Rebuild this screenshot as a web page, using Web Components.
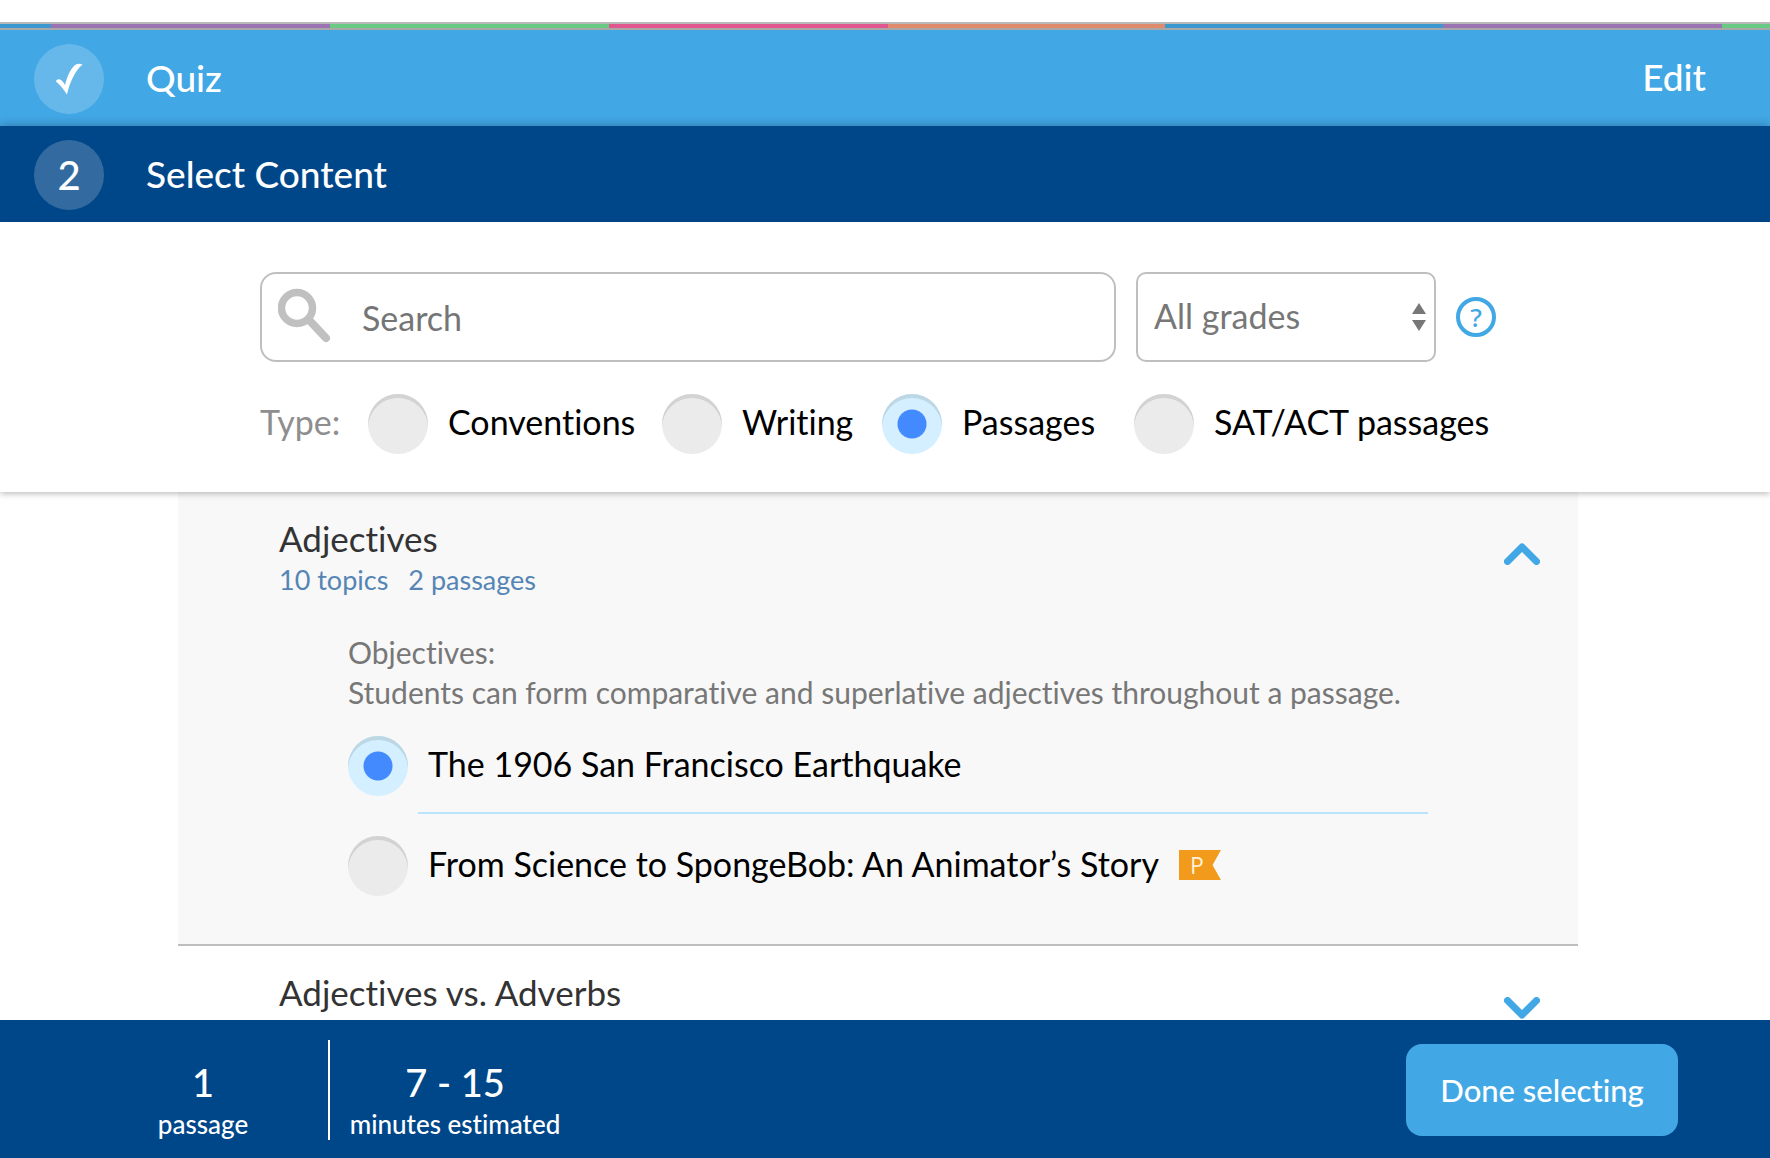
<!DOCTYPE html>
<html lang="en">
<head>
<meta charset="utf-8">
<title>Assign a quiz: select content</title>
<style>
  html, body { height: 100%; margin: 0; }
  body {
    font-family: Lato, "Open Sans", sans-serif;
    font-size: 34px;
    font-variant-ligatures: none;
    color: #000;
    background: #fff;
    --sky: #41a7e5;
    --navy: #00478a;
    --line: #bfbfbf;
  }
</style>
</head>
<body>
<quiz-app></quiz-app>

<script>
const radioStyles = `
  input[type=radio] {
    appearance: none; flex: none; margin: 0;
    width: 60px; height: 60px; border-radius: 50%;
    background: #ebebeb;
    box-shadow: inset 0 4px 0 #d3d3d3;
    cursor: pointer;
  }
  input[type=radio]:checked {
    background: radial-gradient(circle, #448aff 0 14px, #d4efff 15px);
    box-shadow: inset 0 4px 0 #bdd7e5;
  }
  label { padding-bottom: 4px; line-height: 40px; white-space: nowrap; cursor: pointer; }
`;

function define(name, html) {
  const template = document.createElement('template');
  template.innerHTML = html;
  customElements.define(name, class extends HTMLElement {
    constructor() {
      super();
      this.attachShadow({ mode: 'open' }).append(template.content.cloneNode(true));
    }
  });
}

define('color-stripe', `
  <style>
    :host {
      display: block; flex: none; height: 4px; margin-top: 22px;
      border-top: 2px solid #b9b9b9; border-bottom: 2px solid #a8a8a8;
      background: linear-gradient(90deg, #3b99d2 51px, #9b72b2 0 330px, #67cb83 0 609px,
        #e2568f 0 888px, #df8a6b 0 1165px, #3b99d2 0 1443px, #9b72b2 0 1722px, #67cb83 0);
    }
  </style>`);

define('step-bar', `
  <style>
    :host {
      display: flex; flex: none; align-items: center; box-sizing: border-box;
      padding: 14px 64px 12px 34px; color: #fff; background: var(--sky);
      font-size: 37px; font-weight: 500;
    }
    :host([current]) { position: relative; background: var(--navy); box-shadow: 0 0 10px rgba(0,0,0,.3); }
    .mark {
      display: flex; align-items: center; justify-content: center; flex: none;
      width: 70px; height: 70px; margin-right: 42px; border-radius: 50%;
      background: rgba(255,255,255,.2); font-size: 40px;
    }
    h2 { flex: 1; margin: 0; padding-bottom: 2px; font: inherit; line-height: 48px; }
  </style>
  <span class="mark"><slot name="mark"></slot></span>
  <h2><slot></slot></h2>
  <slot name="action"></slot>`);

define('search-box', `
  <style>
    :host { display: block; }
    .box {
      display: flex; align-items: center; box-sizing: border-box; height: 90px;
      padding-left: 16px; border: 2px solid var(--line); border-radius: 16px;
    }
    svg { flex: none; width: 54px; height: 56px; margin-bottom: 4px; }
    input {
      flex: 1; min-width: 0; height: 80px; margin: 0; padding: 0 16px 0 30px; border: 0; outline: 0;
      background: none; font: inherit; color: #333;
    }
    input::placeholder { color: #757575; opacity: 1; }
  </style>
  <div class="box">
    <svg viewBox="0 0 54 56" fill="none" stroke="#c0c0c0" aria-hidden="true">
      <circle cx="19" cy="21" r="15.5" stroke-width="7.5"/>
      <path d="M31 33 48 51" stroke-width="8" stroke-linecap="round"/>
    </svg>
    <input type="search" placeholder="Search" aria-label="Search">
  </div>`);

define('grade-select', `
  <style>
    :host { display: grid; align-items: center; }
    select, svg { grid-area: 1 / 1; }
    select {
      appearance: none; box-sizing: border-box; width: 100%; height: 90px; margin: 0;
      padding: 0 40px 4px 16px; border: 2px solid var(--line); border-radius: 10px;
      background: #fff; font: inherit; color: #777;
    }
    svg { justify-self: end; width: 14px; height: 28px; margin-right: 10px; pointer-events: none; z-index: 1; }
  </style>
  <select aria-label="Grade">
    <option>All grades</option>
  </select>
  <svg viewBox="0 0 14 28" fill="#777" aria-hidden="true"><path d="M7 0 14 11H0ZM0 17H14L7 28Z"/></svg>`);

define('help-button', `
  <style>
    :host { display: block; }
    button {
      display: flex; align-items: center; justify-content: center; box-sizing: border-box;
      width: 40px; height: 40px; padding: 0; border: 4px solid var(--sky); border-radius: 50%;
      background: #fff; color: var(--sky); font: 500 26px/32px "Noto Sans", sans-serif; cursor: pointer;
    }
  </style>
  <button type="button" aria-label="Help">?</button>`);

define('type-filter', `
  <style>${radioStyles}
    :host { display: block; }
    fieldset {
      display: grid; grid-template-columns: 108px 294px 220px 252px auto; align-items: center;
      margin: 0; padding: 0; border: 0; min-width: 0;
    }
    .title { padding-bottom: 4px; line-height: 40px; color: #8e8e8e; }
    .option { display: flex; align-items: center; gap: 20px; }
  </style>
  <fieldset aria-label="Type">
    <span class="title">Type:</span>
    <span class="option"><input type="radio" name="type" id="conventions"><label for="conventions">Conventions</label></span>
    <span class="option"><input type="radio" name="type" id="writing"><label for="writing">Writing</label></span>
    <span class="option"><input type="radio" name="type" id="passages" checked><label for="passages">Passages</label></span>
    <span class="option"><input type="radio" name="type" id="sat"><label for="sat">SAT/ACT passages</label></span>
  </fieldset>`);

define('filter-panel', `
  <style>
    :host {
      display: block; flex: none; position: relative; padding: 50px 14px 38px 0;
      background: #fff; box-shadow: 0 2px 6px rgba(0,0,0,.25);
    }
    .inner { width: 1236px; max-width: 100%; margin: 0 auto; }
    .row { display: flex; align-items: center; gap: 20px; margin-bottom: 32px; }
    search-box { flex: 1; }
    grade-select { width: 300px; }
  </style>
  <div class="inner">
    <div class="row">
      <search-box></search-box>
      <grade-select></grade-select>
      <help-button></help-button>
    </div>
    <type-filter></type-filter>
  </div>`);

define('premium-flag', `
  <style>
    :host {
      display: block; box-sizing: border-box; width: 42px; height: 30px; padding-left: 11px;
      margin-bottom: 2px;
      background: #f29a1b; color: #fff3d8; font: 400 23px/30px "Open Sans", sans-serif;
      clip-path: polygon(0 0, 100% 0, 80% 50%, 100% 100%, 0 100%);
    }
  </style>P`);

define('passage-list', `
  <style>${radioStyles}
    :host { display: block; }
    .passage { display: flex; align-items: center; gap: 20px; padding-top: 22px; }
    hr { height: 2px; margin: 16px 0 0 70px; border: 0; background: #b8e5fc; }
  </style>
  <div role="radiogroup" aria-label="Passages">
    <div class="passage"><input type="radio" name="passage" id="quake" checked><label for="quake">The 1906 San Francisco Earthquake</label></div>
    <hr>
    <div class="passage"><input type="radio" name="passage" id="sponge"><label for="sponge">From Science to SpongeBob: An Animator’s Story</label><premium-flag></premium-flag></div>
  </div>`);

define('topic-section', `
  <style>
    :host { display: block; box-sizing: border-box; padding: 24px 38px 48px 101px; border-bottom: 2px solid var(--line); }
    :host([open]) { background: #f8f8f8; }
    header { display: flex; justify-content: space-between; }
    h3 { margin: 0; font-size: 35px; font-weight: 400; line-height: 44px; color: #333; }
    .meta { display: flex; gap: 20px; font-size: 27px; line-height: 40px; color: #5585b5; }
    button { align-self: flex-start; margin-top: 27px; padding: 0; border: 0; background: none; cursor: pointer; }
    svg { display: block; width: 36px; height: 22px; }
    :host(:not([open])) svg { transform: scaleY(-1); }
    .body { display: none; padding: 32px 112px 0 69px; }
    :host([open]) .body { display: block; }
  </style>
  <header>
    <div>
      <h3><slot name="title"></slot></h3>
      <div class="meta"><slot name="meta"></slot></div>
    </div>
    <button type="button" aria-label="Toggle topic">
      <svg viewBox="0 0 36 22" fill="none" stroke="#41a7e5" stroke-width="7" stroke-linecap="round" stroke-linejoin="round"><path d="M3.5 18.5 18 4 32.500 18.500"/></svg>
    </button>
  </header>
  <div class="body"><slot></slot></div>`);

define('summary-bar', `
  <style>
    :host {
      display: flex; flex: none; align-items: center; box-sizing: border-box; height: 138px;
      padding: 2px 92px 0 78px; background: var(--navy); color: #fff;
    }
    .stat { box-sizing: border-box; width: 250px; height: 100px; padding-top: 19px; text-align: center; }
    .stat + .stat { border-left: 2px solid #fff; width: 252px; }
    b, small { display: block; font-weight: 500; }
    b { font-size: 38px; line-height: 46px; }
    small { font-size: 26px; line-height: 38px; }
    button {
      height: 92px; width: 272px; margin-left: auto; padding: 0; border: 0; border-radius: 16px;
      background: #42a8e5; color: #fff; font: inherit; font-size: 31px; font-weight: 500; cursor: pointer;
    }
  </style>
  <div class="stat"><b>1</b><small>passage</small></div>
  <div class="stat"><b>7 - 15</b><small>minutes estimated</small></div>
  <button type="button">Done selecting</button>`);

define('quiz-app', `
  <style>
    :host { display: flex; flex-direction: column; height: 100vh; overflow: hidden; }
    a { padding-bottom: 6px; color: #fff; text-decoration: none; }
    .check { display: block; width: 28px; height: 32px; }
    main { flex: 1; min-height: 0; overflow: hidden; padding-right: 14px; }
    .topics { width: 1400px; max-width: 100%; margin: 0 auto; }
    .objectives { margin: 0 0 2px; font-size: 30px; line-height: 40px; color: #777; }
  </style>
  <color-stripe></color-stripe>
  <step-bar>
    <svg slot="mark" class="check" viewBox="0 0 28 32" fill="#fff" aria-label="Done"><path d="M1 18.500C1 17 3 15.500 5 16.500 7.500 17.500 9 20 10 22 12 14 15 7 19 3 21 .8 25 .2 27.500 1.500 21 7 15 18 12 31.500 9 27 5 21.500 1 18.500Z"/></svg>
    Quiz
    <a slot="action" href="#quiz">Edit</a>
  </step-bar>
  <step-bar current><span slot="mark">2</span>Select Content</step-bar>
  <filter-panel></filter-panel>
  <main>
    <div class="topics">
      <topic-section open>
        <span slot="title">Adjectives</span>
        <span slot="meta">10 topics</span>
        <span slot="meta">2 passages</span>
        <p class="objectives">Objectives:<br>Students can form comparative and superlative adjectives throughout a passage.</p>
        <passage-list></passage-list>
      </topic-section>
      <topic-section>
        <span slot="title">Adjectives vs. Adverbs</span>
      </topic-section>
    </div>
  </main>
  <summary-bar></summary-bar>`);
</script>
</body>
</html>
